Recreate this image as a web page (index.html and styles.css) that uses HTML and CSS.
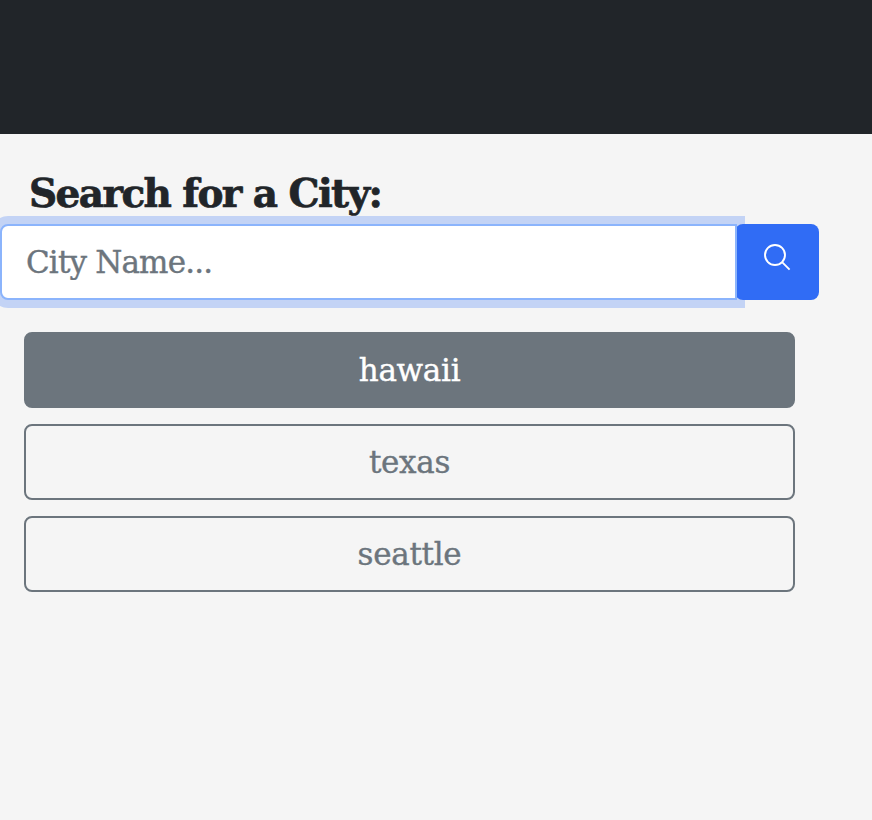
FILE: index.html
```html
<!DOCTYPE html>
<html lang="en">
<head>
<meta charset="utf-8">
<title>City Search</title>
<link rel="stylesheet" href="styles.css">
</head>
<body>
<header class="banner"></header>
<main class="panel">
<h2 class="title">Search for a City:</h2>
<form class="search">
<input class="field" type="text" placeholder="City Name..." aria-label="City Name">
<button class="submit" type="button" aria-label="Search"><svg viewBox="0 0 28 28" fill="none" stroke="#fff" stroke-width="1.9"><circle cx="12" cy="12" r="10"/><path d="M19.1 19.1L26.6 26.6"/></svg></button>
</form>
<div class="cities">
<button class="city active" type="button">hawaii</button>
<button class="city" type="button">texas</button>
<button class="city" type="button">seattle</button>
</div>
</main>
</body>
</html>
```
FILE: styles.css
```css
* { box-sizing: border-box; }
body { margin: 0; background: #f5f5f5; color: #212529; font-family: "DejaVu Serif", serif; }
.banner { height: 134px; background: #212529; }
.panel { width: 819px; padding-top: 35px; }
.title { position: relative; z-index: 1; margin: 0 0 7px 29px; height: 48px; font-size: 39px; line-height: 49px; font-weight: 700; letter-spacing: -1.6px; white-space: nowrap; -webkit-text-stroke: 0.7px #212529; }
.search { display: flex; height: 76px; }
.field { width: 737px; flex: none; padding: 0 24px; border: 2px solid #8bb4fc; border-radius: 8px 0 0 8px; background: #fff; box-shadow: 0 0 0 8px #c3d3f5; font: inherit; font-size: 31px; outline: 0; letter-spacing: -0.85px; }
.field::placeholder { color: #6c757d; opacity: 1; -webkit-text-stroke: 0.4px #6c757d; }
.submit { position: relative; width: 84px; margin-left: -2px; padding: 19px 0 0 28px; border: 0; border-radius: 8px; background: #306cf5; display: flex; align-items: flex-start; clip-path: inset(0 0 0 2px); }
.submit svg { width: 28px; height: 28px; }
.cities { display: flex; flex-direction: column; gap: 16px; margin: 32px 24px 0; }
.city { height: 76px; padding: 0; border: 2px solid #6c757d; border-radius: 8px; background: transparent; color: #6c757d; font: inherit; font-size: 31px; line-height: 71px; letter-spacing: -0.3px; -webkit-text-stroke: 0.4px; }
.active { background: #6c757d; color: #fff; }
```
